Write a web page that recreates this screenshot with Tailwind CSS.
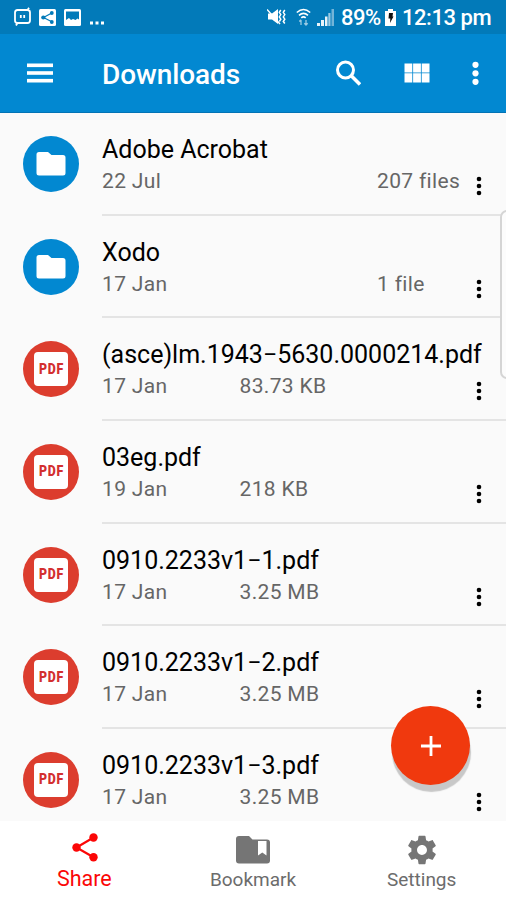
<!DOCTYPE html>
<html lang="en">
<head>
  <meta charset="UTF-8">
  <meta name="viewport" content="width=device-width, initial-scale=1.0">
  <title>Downloads</title>
  <script src="https://cdn.jsdelivr.net/npm/@tailwindcss/browser@4"></script>
</head>
<body class="relative flex h-[900px] w-[506px] flex-col overflow-hidden bg-[#fafafa] font-['Roboto',sans-serif]">

  <!-- Shared icons -->
  <svg class="hidden">
    <symbol id="folder" viewBox="0 0 30 24">
      <path fill="#fff" d="M3 0h9l3.500 3H27q2.500 0 2.500 2.500v15.500q0 2.500-2.500 2.500H3q-2.500 0-2.500-2.500V2.500Q.5 0 3 0z"/>
    </symbol>
    <symbol id="dots" viewBox="0 0 6 20">
      <circle cx="3" cy="3" r="2.300"/><circle cx="3" cy="10" r="2.300"/><circle cx="3" cy="17" r="2.300"/>
    </symbol>
  </svg>

  <!-- Status bar -->
  <div class="flex h-[34px] shrink-0 items-center justify-between bg-[#027ab9] pr-[14px] pl-[14px] text-white">
    <div class="flex items-center gap-2">
      <svg class="h-[20px] w-[17px]" viewBox="0 0 17 20" fill="none" stroke="#fff" stroke-width="1.800">
        <path d="M13 3H3.500Q1 3 1 5.500v8q0 2.500 2.500 2.500h10q2.500 0 2.500-2.500v-8Q16 3 13.500 3L15 .8M3.500 16 2 18.500M6.800 8v3M10.200 8v3"/>
      </svg>
      <svg class="size-[17px]" viewBox="0 0 17 17">
        <rect width="17" height="17" rx="1.500" fill="#fff"/>
        <path d="M12.800 4 4.500 8.500l8.300 4.300" fill="none" stroke="#027ab9" stroke-width="1.200"/>
        <g fill="#027ab9"><circle cx="12.800" cy="4" r="1.900"/><circle cx="4.300" cy="8.500" r="2.100"/><circle cx="12.800" cy="13" r="1.900"/></g>
      </svg>
      <svg class="size-[17px]" viewBox="0 0 17 17">
        <rect width="17" height="17" rx="1.500" fill="#fff"/>
        <path d="M2 2.500h13v8l-1.500-1-2 1.500-2.500-1-2 1-2-2-3 2z" fill="#027ab9"/>
      </svg>
      <svg class="h-[17px] w-[16px]" viewBox="0 0 16 17" fill="#fff">
        <rect x="1" y="12.500" width="3" height="3"/><rect x="6.500" y="12.500" width="3" height="3"/><rect x="12" y="12.500" width="3" height="3"/>
      </svg>
    </div>
    <div class="flex items-center">
      <svg class="mr-[10px] h-[18px] w-[19px]" viewBox="0 0 19 18">
        <path fill="#fff" d="M1 5.500h4l6-4.500v15l-6-4.500H1z"/>
        <path d="M0 1.500l13 14.500M13.800 2l-1.500 2.300 1.500 2.300-1.500 2.300 1.500 2.300-1.500 2.300M17.800 2l-1.500 2.300 1.500 2.300-1.500 2.300 1.500 2.300-1.500 2.300 1.500 2" fill="none" stroke="#fff" stroke-width="1.500"/>
      </svg>
      <svg class="mr-[6px] h-[18px] w-[15px]" viewBox="0 0 15 18" fill="none" stroke="#fff" stroke-width="1.600">
        <path d="M.8 4.500q6.700-6 13.400 0M3 7.300q4.500-4 9 0M5.300 9.800q2.200-2 4.400 0"/>
        <path d="M5 17v-5M3.300 13.500 5 11.800M10 12v5M8.300 15.200 10 17l1.700-1.800" stroke="#9bcbe4" stroke-width="1.300"/>
      </svg>
      <svg class="mr-[7px] h-[17px] w-[17px]" viewBox="0 0 17 17">
        <path fill="#e8f3f9" d="M0 14h3v3H0zM4 11h3v6H4zM8 7.500h2.500V17H8z"/>
        <path fill="#9bcbe4" d="M11.300 4h2.200v13h-2.200z"/>
        <path fill="#72b4d8" d="M14.500 0H17v17h-2.500z"/>
      </svg>
      <span class="mr-[4px] w-[40px] pt-px text-[22px] leading-[34px] font-medium whitespace-nowrap tracking-[-0.500px]">89%</span>
      <svg class="mr-[6px] h-[17px] w-[11px]" viewBox="0 0 11 17">
        <path fill="#fff" d="M3 0h5v2h3v15H0V2h3z"/>
        <path fill="#111" d="M4 4h4L7.500 7.500h1L5 14l.3-4.500H3.500z"/>
      </svg>
      <span class="w-[90px] pt-px text-[22px] leading-[34px] font-medium tracking-[-0.450px] whitespace-nowrap">12:13 pm</span>
    </div>
  </div>

  <!-- App bar -->
  <header class="flex h-[79px] shrink-0 items-center border-b border-[#0273b5] bg-[#0288d1] pl-[27px] text-white">
    <svg class="h-[20px] w-[26px]" viewBox="0 0 26 20" fill="#fff">
      <rect y=".5" width="26" height="3.600"/><rect y="8.200" width="26" height="3.600"/><rect y="15.900" width="26" height="3.600"/>
    </svg>
    <h1 class="ml-[49px] flex-1 pt-[3px] text-[28px] leading-8 font-medium whitespace-nowrap tracking-[-0.100px]">Downloads</h1>
    <svg class="size-[26px]" viewBox="0 0 26 26" fill="none" stroke="#fff">
      <circle cx="10.500" cy="10" r="8" stroke-width="3"/><path d="M16 15.500l9 9" stroke-width="3.600"/>
    </svg>
    <svg class="ml-[43px] h-[20px] w-[26px]" viewBox="0 0 26 20" fill="#fff">
      <path d="M.5.500h7.800v9H.5zM9.100.500h7.800v9H9.100zM17.700.500h7.800v9h-7.800zM.5 10.300h7.800v9.200H.5zM9.100 10.300h7.800v9.200H9.100zM17.700 10.300h7.800v9.200h-7.800z"/>
    </svg>
    <svg class="mr-[27px] ml-[42px] h-[24px] w-[7px]" viewBox="0 0 7 24" fill="#fff">
      <circle cx="3.500" cy="3.800" r="3.100"/><circle cx="3.500" cy="12.300" r="3.100"/><circle cx="3.500" cy="20.800" r="3.100"/>
    </svg>
  </header>

  <!-- File list -->
  <main class="h-[708px] shrink-0 overflow-hidden">
    <div class="flex h-[102.700px] pl-[23px]">
      <div class="mt-[23px] flex size-[56px] shrink-0 items-center justify-center rounded-full bg-[#0288d1]"><svg class="h-[24px] w-[30px]"><use href="#folder"/></svg></div>
      <div class="ml-[23px] flex flex-1 border-b-2 border-[#e4e4e4]">
        <div class="w-[373.500px] pt-[21px] whitespace-nowrap">
          <p class="text-[25px] leading-8 text-black">Adobe Acrobat</p>
          <div class="flex text-[21px] leading-[30px] tracking-[0.330px] text-[#666]"><span class="w-[275px]">22 Jul</span><span>207 files</span></div>
        </div>
        <svg class="mt-[63px] h-[20px] w-[6px]"><use href="#dots"/></svg>
      </div>
    </div>
    <div class="flex h-[102.700px] pl-[23px]">
      <div class="mt-[23px] flex size-[56px] shrink-0 items-center justify-center rounded-full bg-[#0288d1]"><svg class="h-[24px] w-[30px]"><use href="#folder"/></svg></div>
      <div class="ml-[23px] flex flex-1 border-b-2 border-[#e4e4e4]">
        <div class="w-[373.500px] pt-[21px] whitespace-nowrap">
          <p class="text-[25px] leading-8 text-black">Xodo</p>
          <div class="flex text-[21px] leading-[30px] tracking-[0.330px] text-[#666]"><span class="w-[275px]">17 Jan</span><span>1 file</span></div>
        </div>
        <svg class="mt-[63px] h-[20px] w-[6px]"><use href="#dots"/></svg>
      </div>
    </div>
    <div class="flex h-[102.700px] pl-[23px]">
      <div class="mt-[23px] flex size-[56px] shrink-0 items-center justify-center rounded-full bg-[#dc3d2e]"><span class="flex size-[34px] items-center justify-center rounded-[4px] bg-white text-[#d32f2f]"><span class="scale-x-[0.800] pl-[2px] text-[15.500px] leading-none font-black tracking-[0.900px]">PDF</span></span></div>
      <div class="ml-[23px] flex flex-1 border-b-2 border-[#e4e4e4]">
        <div class="w-[373.500px] pt-[21px] whitespace-nowrap">
          <p class="text-[25px] leading-8 text-black">(asce)lm.1943−5630.0000214.pdf</p>
          <div class="flex text-[21px] leading-[30px] tracking-[0.330px] text-[#666]"><span class="w-[137.500px]">17 Jan</span><span>83.73 KB</span></div>
        </div>
        <svg class="mt-[63px] h-[20px] w-[6px]"><use href="#dots"/></svg>
      </div>
    </div>
    <div class="flex h-[102.700px] pl-[23px]">
      <div class="mt-[23px] flex size-[56px] shrink-0 items-center justify-center rounded-full bg-[#dc3d2e]"><span class="flex size-[34px] items-center justify-center rounded-[4px] bg-white text-[#d32f2f]"><span class="scale-x-[0.800] pl-[2px] text-[15.500px] leading-none font-black tracking-[0.900px]">PDF</span></span></div>
      <div class="ml-[23px] flex flex-1 border-b-2 border-[#e4e4e4]">
        <div class="w-[373.500px] pt-[21px] whitespace-nowrap">
          <p class="text-[25px] leading-8 text-black">03eg.pdf</p>
          <div class="flex text-[21px] leading-[30px] tracking-[0.330px] text-[#666]"><span class="w-[137.500px]">19 Jan</span><span>218 KB</span></div>
        </div>
        <svg class="mt-[63px] h-[20px] w-[6px]"><use href="#dots"/></svg>
      </div>
    </div>
    <div class="flex h-[102.700px] pl-[23px]">
      <div class="mt-[23px] flex size-[56px] shrink-0 items-center justify-center rounded-full bg-[#dc3d2e]"><span class="flex size-[34px] items-center justify-center rounded-[4px] bg-white text-[#d32f2f]"><span class="scale-x-[0.800] pl-[2px] text-[15.500px] leading-none font-black tracking-[0.900px]">PDF</span></span></div>
      <div class="ml-[23px] flex flex-1 border-b-2 border-[#e4e4e4]">
        <div class="w-[373.500px] pt-[21px] whitespace-nowrap">
          <p class="text-[25px] leading-8 text-black">0910.2233v1−1.pdf</p>
          <div class="flex text-[21px] leading-[30px] tracking-[0.330px] text-[#666]"><span class="w-[137.500px]">17 Jan</span><span>3.25 MB</span></div>
        </div>
        <svg class="mt-[63px] h-[20px] w-[6px]"><use href="#dots"/></svg>
      </div>
    </div>
    <div class="flex h-[102.700px] pl-[23px]">
      <div class="mt-[23px] flex size-[56px] shrink-0 items-center justify-center rounded-full bg-[#dc3d2e]"><span class="flex size-[34px] items-center justify-center rounded-[4px] bg-white text-[#d32f2f]"><span class="scale-x-[0.800] pl-[2px] text-[15.500px] leading-none font-black tracking-[0.900px]">PDF</span></span></div>
      <div class="ml-[23px] flex flex-1 border-b-2 border-[#e4e4e4]">
        <div class="w-[373.500px] pt-[21px] whitespace-nowrap">
          <p class="text-[25px] leading-8 text-black">0910.2233v1−2.pdf</p>
          <div class="flex text-[21px] leading-[30px] tracking-[0.330px] text-[#666]"><span class="w-[137.500px]">17 Jan</span><span>3.25 MB</span></div>
        </div>
        <svg class="mt-[63px] h-[20px] w-[6px]"><use href="#dots"/></svg>
      </div>
    </div>
    <div class="flex h-[102.700px] pl-[23px]">
      <div class="mt-[23px] flex size-[56px] shrink-0 items-center justify-center rounded-full bg-[#dc3d2e]"><span class="flex size-[34px] items-center justify-center rounded-[4px] bg-white text-[#d32f2f]"><span class="scale-x-[0.800] pl-[2px] text-[15.500px] leading-none font-black tracking-[0.900px]">PDF</span></span></div>
      <div class="ml-[23px] flex flex-1">
        <div class="w-[373.500px] pt-[21px] whitespace-nowrap">
          <p class="text-[25px] leading-8 text-black">0910.2233v1−3.pdf</p>
          <div class="flex text-[21px] leading-[30px] tracking-[0.330px] text-[#666]"><span class="w-[137.500px]">17 Jan</span><span>3.25 MB</span></div>
        </div>
        <svg class="mt-[63px] h-[20px] w-[6px]"><use href="#dots"/></svg>
      </div>
    </div>
  </main>

  <!-- Bottom nav -->
  <nav class="grid h-[79px] grid-cols-3 bg-white text-center text-[19px] leading-6 text-[#6c6c6c]">
    <div class="flex flex-col items-center pt-[11px] text-[#fb0707]">
      <svg class="h-[30px] w-[28px]" viewBox="0 0 28 30" fill="#fb0707">
        <path d="M23.500 5.500 6.500 15.500l17 9.700" fill="none" stroke="#fb0707" stroke-width="2.200"/>
        <circle cx="23.500" cy="5.500" r="4.200"/><circle cx="6.500" cy="15.500" r="4.200"/><circle cx="23.500" cy="25.200" r="4.200"/>
      </svg>
      <span class="mt-[5px] text-[21.500px]">Share</span>
    </div>
    <div class="flex flex-col items-center pt-[14px]">
      <svg class="h-[30px] w-[35px]" viewBox="0 0 35 30">
        <path fill="#757575" d="M4 1h10l3.500 3.500H32q3 0 3 3V25.500q0 3-3 3H4q-3 0-3-3V4q0-3 3-3z"/>
        <path fill="#fff" d="M23 6h8.500v14.500l-4.200-3-4.300 3z"/>
      </svg>
      <span class="mt-[3px]">Bookmark</span>
    </div>
    <div class="flex flex-col items-center pt-[12px]">
      <svg class="size-[34px]" viewBox="0 0 24 24" fill="#757575">
        <path d="M19.430 12.980c.040-.320.070-.640.070-.980s-.030-.660-.070-.980l2.110-1.650c.190-.150.240-.420.120-.640l-2-3.460c-.120-.220-.390-.300-.610-.220l-2.490 1c-.520-.400-1.080-.730-1.690-.980l-.380-2.650C14.460 2.180 14.250 2 14 2h-4c-.250 0-.460.180-.490.420l-.380 2.650c-.610.250-1.170.590-1.690.980l-2.490-1c-.230-.090-.490 0-.610.220l-2 3.460c-.130.220-.070.490.120.640l2.110 1.650c-.040.320-.070.650-.070.980s.030.660.070.980l-2.110 1.650c-.190.150-.240.420-.120.640l2 3.460c.120.220.390.300.610.220l2.490-1c.520.400 1.080.730 1.690.980l.380 2.650c.030.240.240.420.490.420h4c.250 0 .460-.180.490-.420l.380-2.650c.610-.250 1.170-.590 1.690-.980l2.490 1c.230.090.490 0 .610-.220l2-3.460c.120-.220.070-.490-.120-.640l-2.110-1.650zM12 15.500c-1.930 0-3.500-1.570-3.500-3.500s1.570-3.500 3.500-3.500 3.500 1.570 3.500 3.500-1.570 3.500-3.500 3.500z"/>
      </svg>
      <span class="mt-px">Settings</span>
    </div>
  </nav>

  <!-- Edge panel handle -->
  <div class="absolute top-[210px] -right-[8px] h-[169px] w-[14px] rounded-[8px] border-2 border-[#d5d5d5] bg-[#fcfcfc]"></div>

  <!-- Add button -->
  <button class="absolute top-[706px] left-[391px] flex size-[79px] items-center justify-center rounded-full bg-[#f0390e] shadow-[1px_7px_1px_#c8c8c8]">
    <svg class="size-[20px]" viewBox="0 0 20 20"><path d="M10 0v20M0 10h20" stroke="#fff" stroke-width="2.800"/></svg>
  </button>

</body>
</html>
